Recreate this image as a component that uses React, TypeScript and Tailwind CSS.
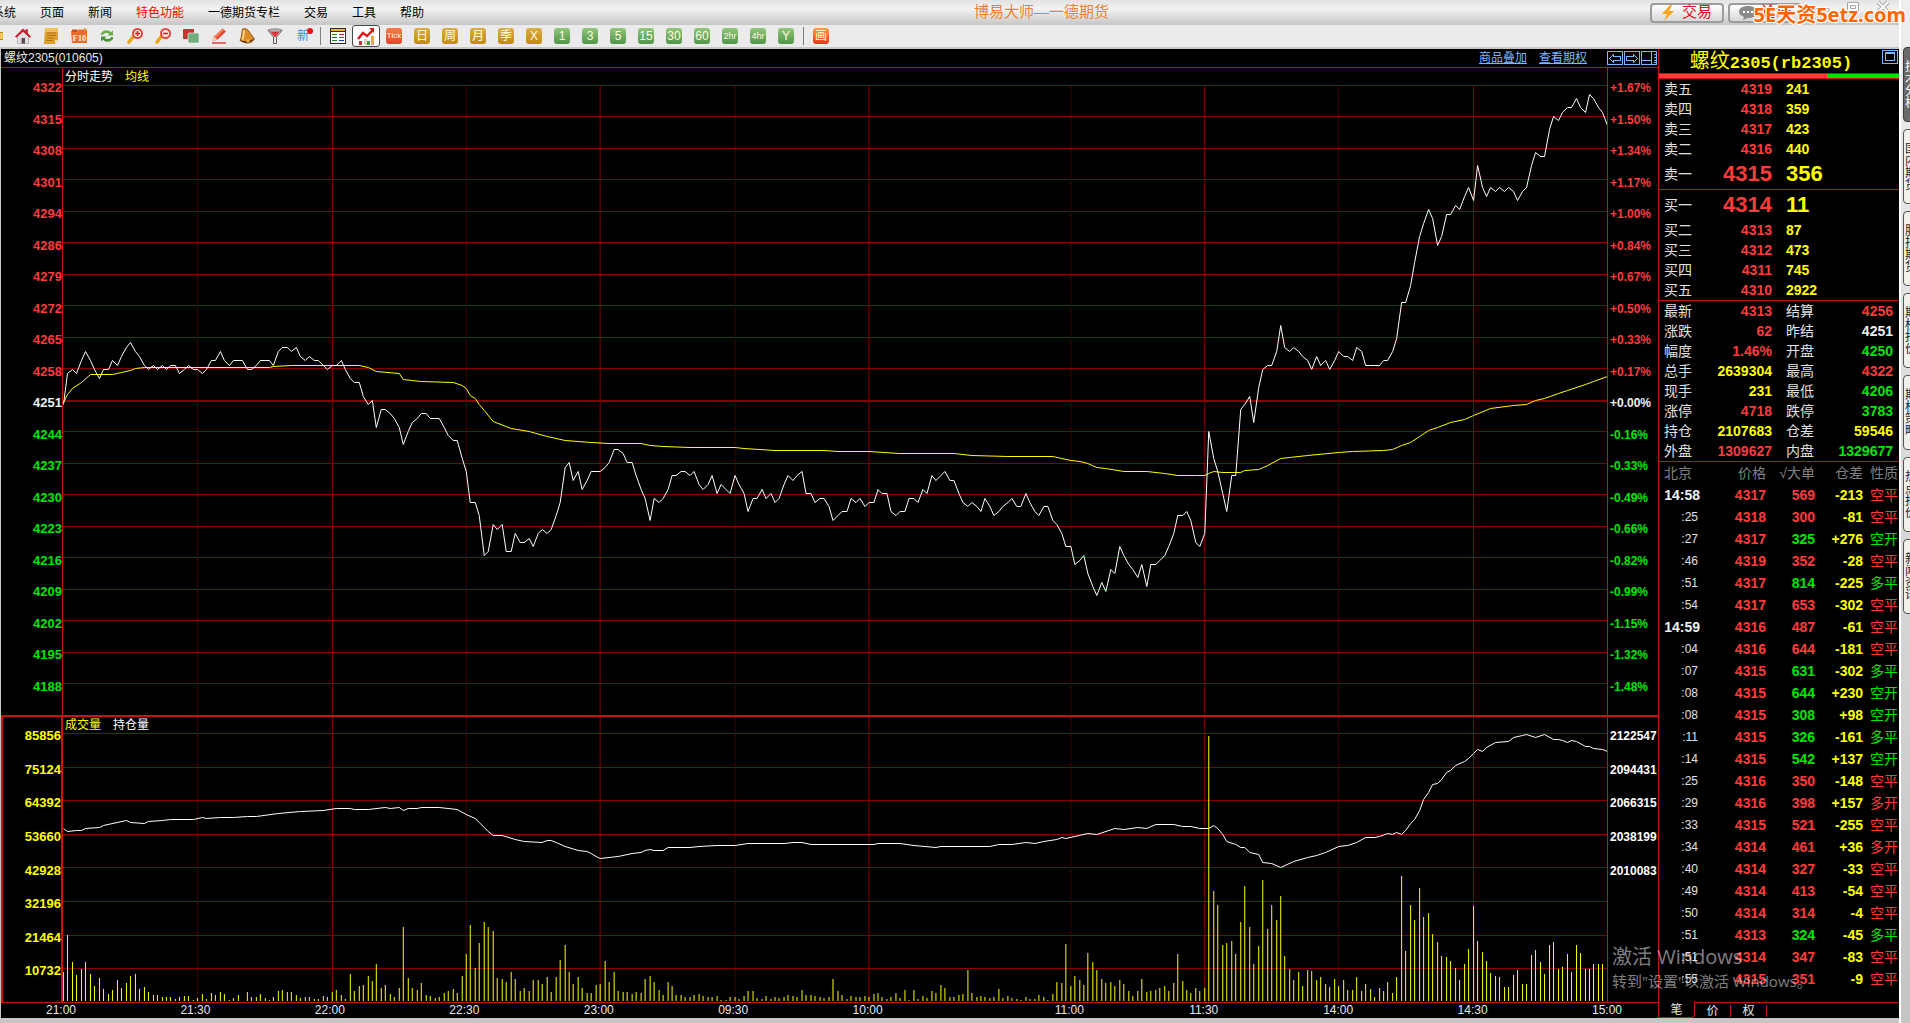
import React from 'react';

const GRID = '#850000';

// one value per trading minute, 21:00 -> 15:00
const PRICES = [
  4250, 4257, 4258, 4257, 4260, 4262, 4260, 4258, 4256, 4258, 4258, 4260, 4259, 4261, 4263, 4264, 4262, 4261, 4259, 4258,
  4259, 4258, 4259, 4258, 4259, 4259, 4257, 4258, 4259, 4258, 4258, 4257, 4258, 4260, 4260, 4262, 4260, 4259, 4260, 4260,
  4260, 4258, 4258, 4259, 4260, 4260, 4260, 4259, 4262, 4263, 4263, 4262, 4263, 4261, 4260, 4261, 4260, 4260, 4259, 4258,
  4259, 4259, 4260, 4258, 4256, 4255, 4255, 4252, 4250, 4251, 4245, 4249, 4249, 4248, 4247, 4245, 4241, 4244, 4246, 4247,
  4248, 4248, 4247, 4247, 4247, 4245, 4243, 4242, 4242, 4238, 4235, 4228, 4228, 4225, 4216, 4217, 4223, 4222, 4223, 4217,
  4217, 4221, 4219, 4219, 4220, 4218, 4221, 4222, 4221, 4222, 4225, 4228, 4236, 4237, 4233, 4235, 4231, 4233, 4235, 4235,
  4235, 4236, 4237, 4240, 4240, 4239, 4237, 4237, 4234, 4231, 4229, 4224, 4229, 4228, 4229, 4231, 4234, 4234, 4235, 4235,
  4234, 4235, 4232, 4231, 4232, 4234, 4230, 4232, 4231, 4230, 4234, 4232, 4230, 4226, 4229, 4229, 4231, 4229, 4230, 4228,
  4229, 4232, 4234, 4233, 4234, 4235, 4230, 4230, 4228, 4229, 4229, 4227, 4224, 4225, 4226, 4226, 4229, 4228, 4229, 4227,
  4228, 4228, 4231, 4230, 4230, 4226, 4225, 4226, 4226, 4229, 4229, 4228, 4231, 4230, 4234, 4233, 4234, 4235, 4233, 4233,
  4230, 4228, 4227, 4228, 4227, 4226, 4229, 4227, 4225, 4226, 4227, 4228, 4229, 4227, 4227, 4230, 4228, 4226, 4225, 4227,
  4227, 4224, 4223, 4221, 4218, 4218, 4214, 4215, 4216, 4212, 4209, 4207, 4210, 4208, 4213, 4212, 4218, 4216, 4214, 4213,
  4211, 4214, 4209, 4214, 4214, 4215, 4216, 4218, 4221, 4225, 4225, 4226, 4224, 4219, 4218, 4221, 4244, 4238, 4235, 4230,
  4226, 4234, 4234, 4249, 4250, 4252, 4246, 4254, 4258, 4259, 4259, 4262, 4268, 4263, 4262, 4263, 4262, 4261, 4260, 4258,
  4261, 4259, 4260, 4258, 4260, 4262, 4261, 4261, 4260, 4263, 4262, 4259, 4259, 4259, 4259, 4260, 4260, 4262, 4265, 4273,
  4273, 4277, 4282, 4288, 4291, 4294, 4292, 4286, 4288, 4293, 4293, 4295, 4294, 4297, 4299, 4296, 4304, 4299, 4297, 4299,
  4298, 4299, 4298, 4299, 4298, 4296, 4298, 4299, 4304, 4307, 4306, 4306, 4312, 4315, 4314, 4316, 4317, 4317, 4319, 4317,
  4316, 4320, 4319, 4317, 4316, 4313,
];

// [minute, average price]
const AVERAGE = [
  [0, 4250.5], [1, 4252.4], [2, 4253.7], [4, 4255], [6, 4256.8], [11, 4256.8], [13, 4257.3], [15, 4257.7], [16, 4258.1],
  [18, 4258.4], [46, 4258.4], [47, 4258.6], [51, 4258.8], [66, 4258.8], [68, 4258.4], [70, 4257.5], [75, 4257.1],
  [76, 4255.8], [78, 4255.4], [80, 4255.2], [87, 4255], [89, 4254.4], [90, 4253.6], [91, 4252.1], [92, 4251.5],
  [93, 4250.2], [94, 4248.7], [96, 4246.3], [100, 4244.8], [104, 4244.1], [108, 4242.9], [112, 4242], [118, 4241.6],
  [122, 4241.3], [129, 4241.2], [131, 4240.8], [134, 4240.6], [140, 4240.3], [150, 4240.3], [152, 4240.1], [159, 4239.8],
  [170, 4239.7], [173, 4239.4], [180, 4239.4], [187, 4239.1], [199, 4239], [203, 4238.5], [211, 4238.3], [221, 4238.3],
  [223, 4238], [225, 4237.4], [227, 4237.3], [229, 4236.7], [231, 4236], [233, 4235.6], [237, 4235.1], [242, 4234.9],
  [246, 4234.5], [249, 4234.2], [253, 4234], [255, 4234], [256, 4234.6], [257, 4234.9], [259, 4234.7], [263, 4234.8],
  [264, 4235.3], [267, 4235.4], [269, 4236.4], [272, 4237.9], [274, 4238.2], [278, 4238.7], [285, 4239.2], [288, 4239.5],
  [295, 4239.8], [297, 4239.9], [299, 4240.8], [301, 4241.6], [303, 4242.9], [305, 4244.2], [307, 4245], [310, 4246],
  [313, 4246.7], [315, 4247.7], [319, 4249.1], [324, 4249.8], [327, 4250.1], [329, 4251], [331, 4251.4], [334, 4252.6],
  [336, 4253.3], [340, 4254.6], [342, 4255.2], [345, 4256.4],
];

// volume per minute, in chart units
const VOLUMES = [
  29, 66, 39, 26, 32, 39, 27, 15, 23, 12, 7, 11, 21, 13, 18, 25, 27, 12, 14, 9,
  6, 6, 4, 4, 4, 2, 4, 5, 5, 1, 3, 7, 2, 8, 6, 9, 7, 1, 3, 6,
  0, 9, 4, 4, 7, 3, 1, 4, 10, 11, 9, 9, 6, 3, 4, 4, 2, 2, 5, 4,
  9, 11, 6, 2, 27, 10, 15, 16, 25, 20, 37, 13, 16, 7, 4, 13, 74, 23, 13, 11,
  18, 6, 5, 3, 4, 8, 10, 12, 8, 25, 47, 76, 33, 58, 79, 74, 70, 23, 22, 19,
  29, 22, 10, 13, 10, 21, 21, 17, 24, 9, 24, 41, 56, 29, 17, 24, 13, 8, 8, 16,
  17, 40, 19, 29, 10, 9, 9, 7, 9, 8, 22, 25, 19, 11, 6, 19, 15, 6, 6, 4,
  4, 6, 7, 5, 4, 4, 5, 1, 1, 4, 4, 2, 5, 10, 10, 3, 2, 5, 2, 4,
  3, 4, 6, 5, 4, 11, 6, 6, 5, 4, 3, 4, 22, 10, 6, 2, 5, 4, 4, 5,
  4, 7, 8, 4, 2, 4, 8, 3, 11, 1, 11, 2, 5, 3, 10, 8, 16, 13, 4, 4,
  6, 7, 31, 8, 4, 5, 4, 3, 4, 12, 3, 5, 3, 2, 1, 4, 2, 2, 6, 4,
  1, 7, 19, 18, 57, 15, 25, 21, 16, 48, 39, 31, 22, 18, 19, 15, 21, 17, 10, 5,
  10, 22, 9, 10, 11, 13, 15, 10, 18, 47, 20, 11, 8, 13, 10, 13, 265, 110, 96, 56,
  58, 60, 47, 79, 115, 74, 37, 55, 121, 72, 96, 81, 105, 45, 32, 21, 29, 15, 31, 30,
  21, 24, 17, 14, 22, 15, 21, 11, 11, 24, 10, 17, 12, 4, 13, 10, 19, 8, 24, 125,
  50, 96, 81, 113, 84, 88, 67, 59, 45, 44, 40, 33, 21, 37, 52, 95, 60, 49, 40, 28,
  25, 24, 14, 14, 26, 31, 17, 17, 46, 51, 39, 27, 56, 59, 32, 34, 47, 29, 56, 48,
  32, 32, 37, 37, 37, 61,
];

// [minute, y] of the open interest line in the volume pane
const INTEREST = [
  [0, 111], [1, 114], [3, 113], [4, 113], [5, 111], [8, 110], [9, 108], [14, 103], [15, 105], [18, 106], [19, 104],
  [22, 103], [24, 102], [29, 102], [31, 100], [32, 101], [35, 100], [38, 100], [41, 99], [43, 99], [48, 96], [53, 94],
  [58, 93], [61, 91], [64, 91], [65, 92], [68, 92], [72, 90], [73, 91], [75, 90], [76, 93], [77, 91], [79, 91], [80, 90],
  [84, 90], [88, 92], [90, 97], [92, 101], [93, 105], [94, 110], [95, 114], [96, 118], [98, 118], [101, 122], [103, 124],
  [107, 125], [108, 123], [109, 123], [110, 125], [112, 129], [115, 133], [117, 134], [118, 136], [119, 139], [120, 141],
  [122, 140], [124, 139], [127, 136], [129, 135], [130, 133], [131, 132], [132, 133], [134, 133], [135, 130], [140, 130],
  [142, 129], [146, 128], [150, 128], [153, 126], [161, 126], [163, 125], [165, 125], [167, 127], [181, 127], [182, 126],
  [187, 126], [190, 128], [195, 130], [196, 129], [207, 129], [209, 127], [212, 127], [215, 125], [217, 126], [219, 124],
  [222, 122], [223, 120], [224, 121], [226, 119], [229, 116], [231, 117], [235, 111], [237, 112], [240, 110], [242, 111],
  [244, 107], [248, 107], [250, 109], [252, 109], [254, 111], [256, 111], [257, 108], [258, 111], [259, 117], [260, 124],
  [262, 127], [263, 130], [264, 130], [265, 135], [267, 137], [268, 145], [270, 146], [272, 150], [275, 144], [278, 140],
  [280, 138], [282, 135], [285, 129], [287, 128], [289, 125], [291, 120], [293, 120], [294, 119], [296, 116], [297, 117],
  [298, 115], [299, 117], [300, 113], [301, 106], [302, 102], [303, 93], [304, 82], [305, 75], [306, 67], [307, 66],
  [308, 62], [309, 55], [310, 53], [311, 48], [313, 44], [314, 41], [315, 36], [316, 32], [317, 34], [318, 30], [320, 25],
  [323, 24], [324, 20], [326, 18], [327, 17], [329, 20], [331, 17], [333, 22], [334, 22], [335, 23], [336, 25], [337, 23],
  [338, 24], [340, 29], [341, 29], [342, 31], [344, 32], [345, 34],
];

const TIMES: [string, number][] = [
  ['21:00', 30], ['21:30', 30], ['22:00', 30], ['22:30', 30], ['23:00', 30], ['09:30', 30],
  ['10:00', 45], ['11:00', 30], ['11:30', 30], ['14:00', 30], ['14:30', 30],
];
const GRID_MINUTES: [number, boolean][] = [
  [30, true], [60, false], [90, true], [120, false], [150, true], [180, false], [225, true], [255, false], [285, true], [315, false],
];

const PRICE_LABELS = ['4322', '4315', '4308', '4301', '4294', '4286', '4279', '4272', '4265', '4258', '4251', '4244', '4237', '4230', '4223', '4216', '4209', '4202', '4195', '4188'];
const PCT_LABELS = ['+1.67%', '+1.50%', '+1.34%', '+1.17%', '+1.00%', '+0.84%', '+0.67%', '+0.50%', '+0.33%', '+0.17%', '+0.00%', '-0.16%', '-0.33%', '-0.49%', '-0.66%', '-0.82%', '-0.99%', '-1.15%', '-1.32%', '-1.48%'];
const VOLUME_LABELS = ['85856', '75124', '64392', '53660', '42928', '32196', '21464', '10732'];
const INTEREST_LABELS = ['2122547', '2094431', '2066315', '2038199', '2010083', '', '', ''];

const RED = 'text-[#ff3b3b]';
const GREEN = 'text-[#00e600]';
const YELLOW = 'text-[#ffff00]';
const WHITE = 'text-[#f0f0f0]';

const ASKS = [['卖五', '4319', '241'], ['卖四', '4318', '359'], ['卖三', '4317', '423'], ['卖二', '4316', '440'], ['卖一', '4315', '356']];
const BIDS = [['买一', '4314', '11'], ['买二', '4313', '87'], ['买三', '4312', '473'], ['买四', '4311', '745'], ['买五', '4310', '2922']];

const QUOTES = [
  ['最新', '4313', RED, '结算', '4256', RED],
  ['涨跌', '62', RED, '昨结', '4251', WHITE],
  ['幅度', '1.46%', RED, '开盘', '4250', GREEN],
  ['总手', '2639304', YELLOW, '最高', '4322', RED],
  ['现手', '231', YELLOW, '最低', '4206', GREEN],
  ['涨停', '4718', RED, '跌停', '3783', GREEN],
  ['持仓', '2107683', YELLOW, '仓差', '59546', YELLOW],
  ['外盘', '1309627', RED, '内盘', '1329677', GREEN],
];

// time, price, volume, bought (red) / sold (green), change, kind
const TICKS: [string, string, string, string, string, string][] = [
  ['14:58', '4317', '569', RED, '-213', '空平'],
  [':25', '4318', '300', RED, '-81', '空平'],
  [':27', '4317', '325', GREEN, '+276', '空开'],
  [':46', '4319', '352', RED, '-28', '空平'],
  [':51', '4317', '814', GREEN, '-225', '多平'],
  [':54', '4317', '653', RED, '-302', '空平'],
  ['14:59', '4316', '487', RED, '-61', '空平'],
  [':04', '4316', '644', RED, '-181', '空平'],
  [':07', '4315', '631', GREEN, '-302', '多平'],
  [':08', '4315', '644', GREEN, '+230', '空开'],
  [':08', '4315', '308', GREEN, '+98', '空开'],
  [':11', '4315', '326', GREEN, '-161', '多平'],
  [':14', '4315', '542', GREEN, '+137', '空开'],
  [':25', '4316', '350', RED, '-148', '空平'],
  [':29', '4316', '398', RED, '+157', '多开'],
  [':33', '4315', '521', RED, '-255', '空平'],
  [':34', '4314', '461', RED, '+36', '多开'],
  [':40', '4314', '327', RED, '-33', '空平'],
  [':49', '4314', '413', RED, '-54', '空平'],
  [':50', '4314', '314', RED, '-4', '空平'],
  [':51', '4313', '324', GREEN, '-45', '多平'],
  [':51', '4314', '347', RED, '-83', '空平'],
  [':55', '4315', '351', RED, '-9', '空平'],
];

const MENU = ['系统', '页面', '新闻', '特色功能', '一德期货专栏', '交易', '工具', '帮助'];
const SIDE_TABS = ['技术分析', '国内期货', '股指期货', '期权报价', '期权策略', '热点报价', '新闻资讯'];

const minuteX = (m: number) => Math.round(m * 4.478) + 0.5;
const priceY = (p: number) => Math.round(315 - (p - 4251) * 4.437) + 0.5;

const Icon: React.FC<{ children: React.ReactNode }> = ({ children }) => (
  <svg viewBox="0 0 16 16" className="w-4 h-4" aria-hidden="true">{children}</svg>
);

const TOOL_ICONS: [string, React.ReactNode][] = [
  ['主页', <Icon key="i"><path d="M2.500 8v7.500h11V8L8 3z" fill="#e4e0e2" stroke="#8d8488" strokeWidth=".5" /><path d="M0 8.500 8 .5l2.500 2.500V1.200h2.300v4L16 8.500l-1.300 1.300L8 3.800 1.300 9.800z" fill="#c81e2e" /><path d="M6.500 10h3.500v5.500H6.500z" fill="#5d4a55" /></Icon>],
  ['公告', <Icon key="i"><path d="M2 0h13v12l-3 4H1z" fill="#dfa02c" /><path d="M2 0h13v4H2z" fill="#f0c25a" /><path d="M4 5h9M4 7.500h9M3.500 10h8M3.500 12.500h6" stroke="#a86d10" strokeWidth=".9" /><path d="m12 16 3-4h-3z" fill="#fbe3a0" /></Icon>],
  ['F10', <Icon key="i"><path d="M0 3h6l1-1.500h9V15H1z" fill="#ef6a2a" /><path d="M1 1.500h5V4H1z" fill="#c9501a" /><path d="M13 0h2v3h-2z" fill="#dba13c" /><text x="1.500" y="12.500" fontSize="8.500" fontWeight="700" fontFamily="Liberation Serif" fill="#fff3dc">F10</text></Icon>],
  ['刷新', <Icon key="i"><path d="M1.500 6.500C3 1.500 9.500 1 12 4.200L14 2.500v5H8.500l1.800-1.600C8 4.200 5 4.800 3.800 7z" fill="#6fae46" /><path d="M14.500 9.500C13 14.500 6.500 15 4 11.800L2 13.500v-5h5.500l-1.800 1.600C8 11.800 11 11.200 12.200 9z" fill="#4f9436" /></Icon>],
  ['放大', <Icon key="i"><path d="m2 14 4-5" stroke="#e8a91c" strokeWidth="3.600" strokeLinecap="round" /><circle cx="10.500" cy="5.500" r="4.500" fill="#fdeeee" stroke="#e8423c" strokeWidth="2" /><path d="M8 5.500h5M10.500 3v5" stroke="#d8241e" strokeWidth="1.600" /></Icon>],
  ['缩小', <Icon key="i"><path d="m2 14 4-5" stroke="#e8a91c" strokeWidth="3.600" strokeLinecap="round" /><circle cx="10.500" cy="5.500" r="4.500" fill="#fdeeee" stroke="#e8423c" strokeWidth="2" /><path d="M8 5.500h5" stroke="#d8241e" strokeWidth="1.600" /></Icon>],
  ['叠加', <Icon key="i"><rect x="0" y="1" width="11" height="10" rx="1" fill="#c5332b" /><rect x="5" y="5" width="11" height="10" rx="1" fill="#6fae7c" stroke="#e8efe8" strokeWidth=".7" /></Icon>],
  ['画线', <Icon key="i"><path d="M1.500 13 3 8.500 11.500.5l3.500 3L6.500 11.500z" fill="#e8452c" /><path d="M1.500 13 3 8.500l3.500 3z" fill="#f3cf9b" /><path d="m3.500 8 8-7.500 1.500 1.200L5 9.500z" fill="#f58a6c" /><path d="M1 15h14" stroke="#e0392b" strokeWidth="1.400" /></Icon>],
  ['预警', <Icon key="i"><path d="M3.500 1C6-.5 10 2 11 5l4.500 6c-2 3-5 4.500-8 4L1 12.500C3 9 2.500 4 3.500 1z" fill="#dc8c28" stroke="#7c4208" strokeWidth=".8" /><path d="M5 2.500c-.5 3 0 6-1.500 9" stroke="#ffdc8c" strokeWidth="1.800" fill="none" /><path d="M1 12.500C6 14 11 13 15 10.500c-1 3.500-9 6.500-14 2z" fill="#5f2c08" /><circle cx="9" cy="13" r="1.700" fill="#f0b448" /></Icon>],
  ['筛选', <Icon key="i"><path d="M1 2.500 6.500 9v6.500h3V9L15 2.500z" fill="#e9e3e3" stroke="#6b5d60" strokeWidth="1" /><path d="M3.500 4h9L8 9.500z" fill="#e23434" /><ellipse cx="8" cy="2.300" rx="7" ry="1.500" fill="#b9aeb0" stroke="#6b5d60" strokeWidth=".6" /></Icon>],
];

const PERIODS: [string, string][] = [
  ['日', 'gold'], ['周', 'gold'], ['月', 'gold'], ['季', 'gold'], ['X', 'gold'],
  ['1', 'green'], ['3', 'green'], ['5', 'green'], ['15', 'green'], ['30', 'green'], ['60', 'green'],
  ['2hr', 'narrow'], ['4hr', 'narrow'], ['Y', 'green'],
];
const PERIOD_STYLE: Record<string, string> = {
  gold: 'bg-linear-to-b from-[#d9ad45] to-[#c48a00] text-[12px]',
  green: 'bg-linear-to-b from-[#93c77c] to-[#4f9448] text-[12px]',
  narrow: 'bg-linear-to-b from-[#93c77c] to-[#4f9448] text-[9px]',
  red: 'bg-linear-to-b from-[#ff9a3c] to-[#e83018] text-[12px]',
  tick: 'bg-linear-to-b from-[#f47a48] to-[#e8442a] text-[8px]',
};

const PeriodButton: React.FC<{ label: string; kind: string }> = ({ label, kind }) => (
  <button className="w-7 h-full flex items-center justify-center shrink-0">
    <span className={`w-4 h-4 flex items-center justify-center rounded-[3px] leading-none text-[#fffbe0] ${PERIOD_STYLE[kind]}`}>{label}</span>
  </button>
);

const MenuBar = () => (
  <header className="relative h-[25px] shrink-0 flex items-center bg-linear-to-b from-[#e2e2e2] via-[#f3f3f3] via-35% to-[#c6c6c6]">
    <nav className="flex gap-6 -ml-2 text-[12px] text-black">
      {MENU.map(m => (
        <button key={m} className={m === '特色功能' ? 'text-[#ff0000]' : ''}>{m}</button>
      ))}
    </nav>
    <h1 className="absolute left-[974px] text-[15px] text-[#f08030]">博易大师—一德期货</h1>
    <div className="ml-auto flex items-center gap-1 text-[15px] text-[#d8101c]">
      <button className="w-[74px] h-5 flex items-center justify-center gap-2 rounded border-2 border-[#9c9c9c] bg-linear-to-b from-white to-[#d8d8d8]">
        <svg viewBox="0 0 12 16" className="w-3 h-4"><path d="M8 0 0 9h5l-3 7L12 6H7l3-6z" fill="#f7a51c" /></svg>
        交易
      </button>
      <button className="w-[74px] h-5 flex items-center justify-center gap-1 rounded border-2 border-[#9c9c9c] bg-linear-to-b from-white to-[#d8d8d8]">
        <svg viewBox="0 0 18 14" className="w-[18px] h-[14px]"><path d="M9 0c5 0 9 2 9 6s-4 6-9 6l-5 2 1-3C2 10 0 8 0 6c0-4 4-6 9-6z" fill="#8a8a8a" /><path d="M4 6h2M8 6h2M12 6h2" stroke="#fff" strokeWidth="2" /></svg>
        论坛
      </button>
    </div>
    <div className="w-[97px] pl-3 h-full flex items-start gap-3 text-[#a8a8a8]">
      <button aria-label="最小化"><svg viewBox="0 0 18 14" className="w-[18px] h-[14px]"><path d="M1 8.500h14v3H1z" fill="#fff" stroke="#a8a8a8" /></svg></button>
      <button aria-label="还原"><svg viewBox="0 0 18 14" className="w-[18px] h-[14px]"><path d="M3.500 2.500h11v9h-11zM6.500 5.500h5v3h-5z" fill="#fff" stroke="#a8a8a8" /></svg></button>
      <button aria-label="关闭"><svg viewBox="0 0 18 14" className="w-[18px] h-[14px]"><path d="m4 2 10 10M14 2 4 12" stroke="#a8a8a8" strokeWidth="4" /><path d="m4 2 10 10M14 2 4 12" stroke="#fff" strokeWidth="2" /></svg></button>
    </div>
  </header>
);

const Toolbar = () => (
  <div className="h-6 shrink-0 flex items-center bg-[#ebebeb] border-b-2 border-[#c9c5c5]">
    <span className="w-[3px] h-2 bg-[#f2c84c] border-y border-[#b98a1c] mr-[6px]" />
    {TOOL_ICONS.map(([label, icon]) => (
      <button key={label} aria-label={label} className="w-7 h-full flex items-center justify-center shrink-0">{icon}</button>
    ))}
    <button className="relative w-7 h-full text-[12px] leading-none text-[#3a8ae0]">
      新
      <span className="absolute right-1 top-[3px] w-[6px] h-[6px] rounded-full bg-[#f01010]" />
    </button>
    <span className="w-px h-[18px] mx-[3px] bg-[#808080]" />
    <button aria-label="报价" className="w-7 h-full flex items-center justify-center">
      <svg viewBox="0 0 16 16" className="w-4 h-4" shapeRendering="crispEdges">
        <path d="M0 0h16v16H0z" fill="#2b2b2b" /><path d="M1 1h14v2H1z" fill="#f0b428" /><path d="M1 4h14v11H1z" fill="#fff" />
        <path d="M2 6.500h5M2 12.500h5" stroke="#1a8a2a" /><path d="M2 9.500h5M9 12.500h5" stroke="#2030c0" /><path d="M9 6.500h5" stroke="#d82020" /><path d="M9 9.500h5" stroke="#1a8a2a" />
      </svg>
    </button>
    <button aria-label="分时走势" className="w-7 h-[22px] flex items-center justify-center rounded-[3px] border border-[#4a4a4a] bg-white">
      <svg viewBox="0 0 18 17" className="w-[18px] h-[17px]"><path d="M1 11 6 5l4 3 6-6" stroke="#d8181c" strokeWidth="2.400" fill="none" /><path d="M12 0h5v5z" fill="#d8181c" /><path d="M2 13h3v4H2z" fill="#c33" /><path d="M7 11h3v6H7z" fill="#d9d0b0" /><path d="M10 13h3v4h-3z" fill="#4a9a3c" /><path d="M14 8h3v9h-3z" fill="#e3a93c" /></svg>
    </button>
    <PeriodButton label="Tick" kind="tick" />
    {PERIODS.map(([label, kind]) => <PeriodButton key={label} label={label} kind={kind} />)}
    <span className="w-px h-[18px] mx-[3px] bg-[#808080]" />
    <PeriodButton label="画" kind="red" />
  </div>
);

const GridColumns: React.FC<{ height: number }> = ({ height }) => (
  <>
    {GRID_MINUTES.map(([m, dotted]) => (
      <path key={m} d={`M${minuteX(m)} 0V${height}`} stroke={GRID} strokeDasharray={dotted ? '1 1' : undefined} />
    ))}
  </>
);

const labelColor = (i: number) => (i < 10 ? RED : i === 10 ? WHITE : GREEN);

const PriceChart = () => (
  <section className="flex-[647_1_0px] min-h-0 flex">
    <div className="w-[61px] shrink-0 pt-[14px] pb-[3px] flex flex-col text-right text-[13px] leading-[12px] font-bold">
      {PRICE_LABELS.map((p, i) => <div key={p} className={`flex-1 ${labelColor(i)}`}>{p}</div>)}
    </div>
    <div className="flex-1 min-w-0 flex flex-col border-x border-[#c8140a]">
      <div className="h-[17px] shrink-0 pl-[2px] pt-px flex items-center gap-3 text-[12px] leading-none">
        <span className="text-white">分时走势</span>
        <span className={YELLOW}>均线</span>
      </div>
      <svg viewBox="0 0 1545 630" preserveAspectRatio="none" className="w-full flex-1 min-h-0" shapeRendering="crispEdges" fill="none">
        {PRICE_LABELS.map((p, i) => <path key={p} d={`M0 ${Math.floor(i * 31.5) + 0.5}H1545`} stroke={GRID} strokeWidth={i === 10 ? 2 : 1} />)}
        <GridColumns height={630} />
        <polyline points={AVERAGE.map(([m, p]) => `${minuteX(m)},${priceY(p)}`).join(' ')} stroke="#ffff00" />
        <polyline points={PRICES.map((p, m) => `${minuteX(m)},${priceY(p)}`).join(' ')} stroke="#ffffff" />
      </svg>
    </div>
    <div className="w-[50px] shrink-0 pl-[2px] pt-[14px] pb-[3px] flex flex-col text-[12px] leading-[12px] font-bold">
      {PCT_LABELS.map((p, i) => <div key={p} className={`flex-1 ${labelColor(i)}`}>{p}</div>)}
    </div>
  </section>
);

const VolumeChart = () => (
  <section className="flex-[285_1_0px] min-h-0 flex border-t-2 border-b border-[#c8140a]">
    <div className={`w-[62px] shrink-0 pt-[13px] pb-[3px] flex flex-col text-right text-[13px] leading-[12px] font-bold border-x-2 border-[#c8140a] ${YELLOW}`}>
      {VOLUME_LABELS.map(v => <div key={v} className="flex-1">{v}</div>)}
    </div>
    <div className="relative flex-1 min-w-0 border-r border-[#c8140a]">
      <svg viewBox="0 0 1545 285" preserveAspectRatio="none" className="block w-full h-full" shapeRendering="crispEdges" fill="none">
        {VOLUME_LABELS.map((v, i) => <path key={v} d={`M0 ${Math.floor(16.500 + i * 33.600) + 0.5}H1545`} stroke={GRID} />)}
        <GridColumns height={285} />
        <polyline points={INTEREST.map(([m, y]) => `${minuteX(m)},${y + 0.5}`).join(' ')} stroke="#ffffff" />
        {VOLUMES.map((v, m) => <path key={m} d={`M${minuteX(m)} 284V${284 - v}`} stroke="#ffff00" />)}
      </svg>
      <div className="absolute left-[2px] top-[2px] flex gap-3 text-[12px] leading-none">
        <span className={YELLOW}>成交量</span>
        <span className="text-white">持仓量</span>
      </div>
    </div>
    <div className="w-[50px] shrink-0 pl-[2px] pt-[13px] pb-[3px] flex flex-col text-[12px] leading-[12px] font-bold text-white">
      {INTEREST_LABELS.map((v, i) => <div key={i} className="flex-1">{v}</div>)}
    </div>
  </section>
);

const TimeAxis = () => (
  <div className="h-[15px] shrink-0 flex pl-[60px] pr-[51px] text-[12px] leading-[15px] text-[#e8e8e8]">
    {TIMES.map(([t, minutes]) => (
      <div key={t} className="w-0 whitespace-nowrap" style={{ flexGrow: minutes }}>
        <span className="inline-block -translate-x-1/2">{t}</span>
      </div>
    ))}
    <div className="w-0 whitespace-nowrap"><span className="inline-block -translate-x-1/2">15:00</span></div>
  </div>
);

const ChartPanel = () => (
  <main className="flex-1 min-w-0 flex flex-col bg-black border-l border-[#c9c5c5]">
    <div className="h-[19px] shrink-0 pl-[3px] pr-[1px] flex items-center text-[12px] leading-none text-[#e8e8e8] border-b border-[#c8140a]">
      <h2>螺纹2305(010605)</h2>
      <a href="#overlay" className="ml-auto text-[#78b8ff] underline">商品叠加</a>
      <a href="#options" className="ml-3 mr-5 text-[#78b8ff] underline">查看期权</a>
      <svg viewBox="0 0 50 15" className="w-[50px] h-[15px]" fill="none" stroke="#78b8ff" shapeRendering="crispEdges">
        <path d="M.5.5h15v13H.5zM17.500.5h15v13h-15zM34.500.5h15v13h-15z" />
        <path d="M2.500 7.500 6.500 3.500v2h7v4h-7v2zM30.500 7.500 26.500 3.500v2h-7v4h7v2zM34.500 9.500h10M44.500.5v13M49 3.500h-2M49 6.500h-2M49 9.500h-2M49 11.500h-2" />
      </svg>
    </div>
    <PriceChart />
    <VolumeChart />
    <TimeAxis />
  </main>
);

const DepthTable: React.FC<{ rows: string[][]; bigIndex: number }> = ({ rows, bigIndex }) => (
  <table className="w-full table-fixed">
    <colgroup><col className="w-[45px]" /><col className="w-[68px]" /><col /></colgroup>
    <tbody>
      {rows.map(([label, price, volume], i) => (
        <tr key={label} className={i === bigIndex ? 'h-[30px] text-[22px]' : 'h-5 text-[14px]'}>
          <th className="pl-[5px] p-0 text-left text-[14px] font-normal text-[#e0e0e0]">{label}</th>
          <td className={`p-0 text-right font-bold ${RED}`}>{price}</td>
          <td className={`p-0 pl-[14px] font-bold ${YELLOW}`}>{volume}</td>
        </tr>
      ))}
    </tbody>
  </table>
);

const QuotePanel = () => (
  <aside className="relative w-[241px] shrink-0 flex flex-col bg-black border-l border-[#c8140a] leading-none">
    <div className="h-6 shrink-0 flex items-center justify-center pr-4 text-[20px] text-[#ffff00]">
      <h2>螺纹<span className="font-['Liberation_Mono'] text-[17px] font-bold">2305(rb2305)</span></h2>
      <button aria-label="还原" className="absolute right-[1px] top-px">
        <svg viewBox="0 0 16 14" className="w-4 h-[14px]" fill="none" stroke="#78b8ff" shapeRendering="crispEdges"><path d="M.5.5h15v13H.5z" /><path d="M3.500 2.500h9v8h-9zM3 3.500h10" /></svg>
      </button>
    </div>
    <div className="h-[6px] shrink-0 flex border-y border-[#c8140a]">
      <div className="w-[70%] bg-[#ff3b3b]" />
      <div className="flex-1 bg-[#00e600]" />
    </div>
    <div className="border-b border-[#c8140a]"><DepthTable rows={ASKS} bigIndex={4} /></div>
    <div className="border-b border-[#c8140a]"><DepthTable rows={BIDS} bigIndex={0} /></div>
    <table className="w-full table-fixed text-[14px] border-b border-[#c8140a]">
      <colgroup><col className="w-[45px]" /><col className="w-[68px]" /><col className="w-[55px]" /><col /></colgroup>
      <tbody>
        {QUOTES.map(([a, av, ac, b, bv, bc]) => (
          <tr key={a} className="h-5">
            <th className="p-0 pl-[5px] text-left font-normal text-[#e0e0e0]">{a}</th>
            <td className={`p-0 text-right font-bold ${ac}`}>{av}</td>
            <th className="p-0 pl-[14px] text-left font-normal text-[#e0e0e0]">{b}</th>
            <td className={`p-0 pr-[6px] text-right font-bold ${bc}`}>{bv}</td>
          </tr>
        ))}
      </tbody>
    </table>
    <table className="w-full table-fixed text-[14px] text-right font-bold">
      <colgroup><col className="w-[41px]" /><col className="w-[66px]" /><col className="w-[49px]" /><col className="w-[48px]" /><col /></colgroup>
      <thead>
        <tr className="h-[22px] text-[#808080] whitespace-nowrap">
          <th className="p-0 pl-[5px] text-left font-normal">北京</th>
          <th className="p-0 font-normal">价格</th>
          <th className="p-0 font-normal">√大单</th>
          <th className="p-0 font-normal">仓差</th>
          <th className="p-0 pr-px font-normal">性质</th>
        </tr>
      </thead>
      <tbody>
        {TICKS.map(([time, price, volume, color, diff, kind], i) => (
          <tr key={i} className="h-[22px]">
            <td className={time[0] === ':' ? 'p-0 pr-[2px] text-[12px] font-normal text-[#e0e0e0]' : `p-0 ${WHITE}`}>{time}</td>
            <td className={`p-0 ${RED}`}>{price}</td>
            <td className={`p-0 ${color}`}>{volume}</td>
            <td className={`p-0 ${YELLOW}`}>{diff}</td>
            <td className={`p-0 pr-px font-normal ${color}`}>{kind}</td>
          </tr>
        ))}
      </tbody>
    </table>
    <div className="mt-auto h-4 shrink-0 flex text-[12px] text-[#e8e8e8]">
      <button className="w-9 border-b border-r border-[#c8140a] rounded-br">笔</button>
      <div className="flex-1 flex items-center border-t border-[#c8140a]">
        <button className="w-9 h-3 border-r border-[#c8140a]">价</button>
        <button className="w-9 h-3 border-r border-[#c8140a]">权</button>
      </div>
    </div>
  </aside>
);

const SideTabs = () => (
  <nav className="w-[9px] shrink-0 pt-[47px] pl-[2px] flex flex-col gap-[7px] overflow-hidden bg-linear-to-b from-[#eeeeee] to-[#c4c4c4]">
    {SIDE_TABS.map((t, i) => (
      <button
        key={t}
        className={`w-6 h-[75px] shrink-0 pl-[1px] flex items-center rounded-l text-[12px] leading-[12px] border ${i === 0 ? 'bg-[#6a6a6a] border-[#3c3c3c] text-white' : 'bg-[#f2f0ea] border-[#555555] text-[#222222]'}`}
      >
        <span className="w-3 break-all">{t}</span>
      </button>
    ))}
  </nav>
);

export default function App() {
  return (
    <div className="relative h-screen flex overflow-hidden bg-[#c9c5c5] font-['Liberation_Sans','Noto_Sans_CJK_SC',sans-serif]">
      <div className="flex-1 min-w-0 flex flex-col">
        <MenuBar />
        <Toolbar />
        <div className="flex-1 min-h-0 flex">
          <ChartPanel />
          <QuotePanel />
        </div>
        <div className="h-[5px] shrink-0 bg-[#c9c5c5]" />
      </div>
      <div className="w-[2px] shrink-0 bg-white" />
      <SideTabs />

      <div className="absolute right-1 top-0 text-[20px] leading-[30px] font-bold text-[#ff6600] font-['Noto_Sans','Noto_Sans_CJK_SC',sans-serif] [text-shadow:1px_1px_0_#fff,-1px_-1px_0_#fff,1px_-1px_0_#fff,-1px_1px_0_#fff]">
        5E天资5etz.com
      </div>
      <div className="absolute left-[1612px] top-[945px] text-white/50 font-['Open_Sans','Noto_Sans_CJK_SC',sans-serif] pointer-events-none">
        <p className="text-[20px] leading-6">激活 Windows</p>
        <p className="text-[15px] leading-6">转到"设置"以激活 Windows。</p>
      </div>
    </div>
  );
}
